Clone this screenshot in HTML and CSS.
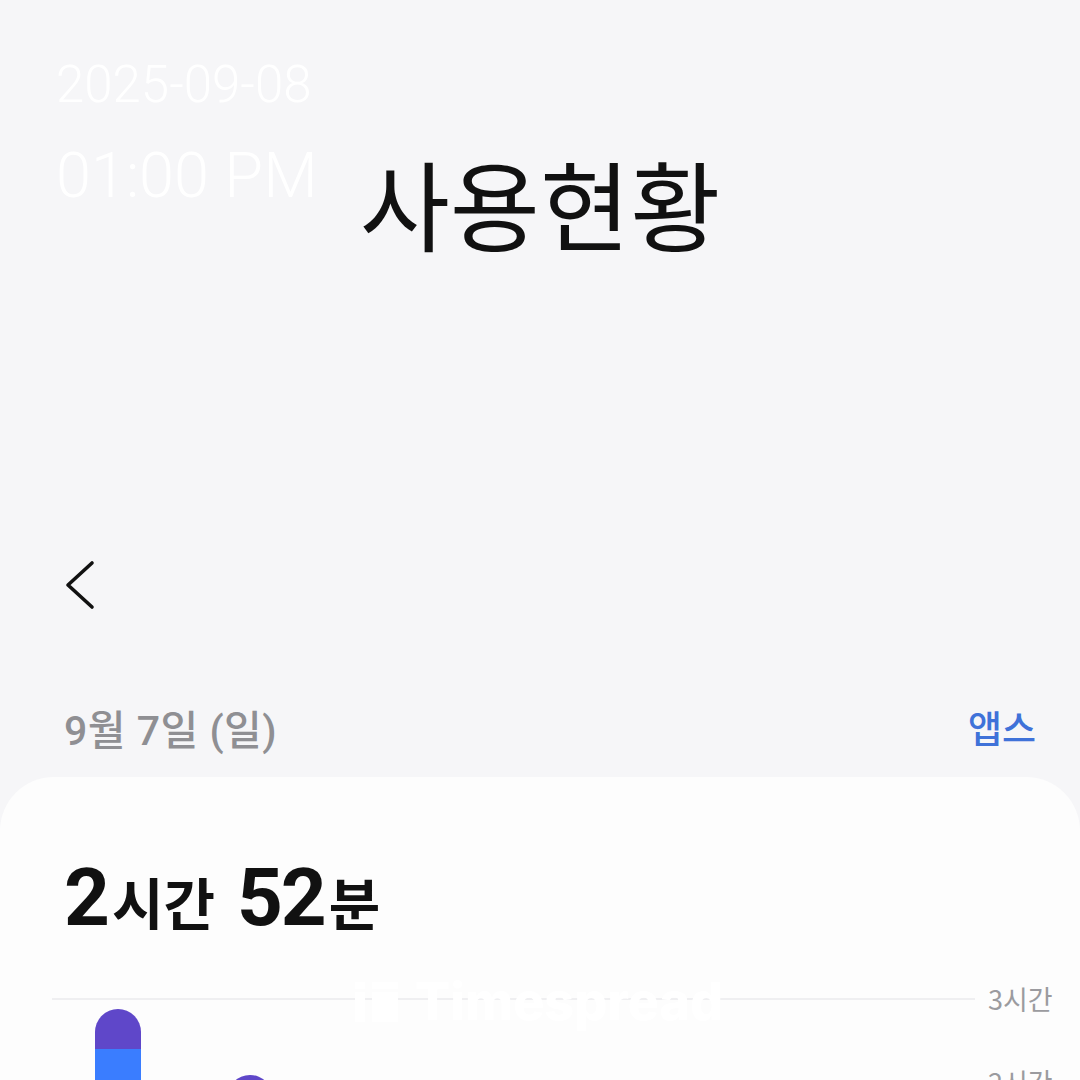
FILE: index.html
```html
<!DOCTYPE html>
<html lang="ko">
<head>
    <meta charset="UTF-8">
    <meta name="viewport" content="width=device-width, initial-scale=1.0">
    <title>사용현황</title>
    <link rel="stylesheet" href="styles.css">
</head>
<body>
    <div class="stamp">
        <div class="stamp-date">2025-09-08</div>
        <div class="stamp-time">01:00 PM</div>
    </div>

    <div class="hero">
        <h1>사용현황</h1>
    </div>

    <div class="nav">
        <svg class="back" width="40" height="56" viewBox="0 0 40 56">
            <path d="M28 5 L4 27 L28 49" fill="none" stroke="#111" stroke-width="3.6" stroke-linecap="round" stroke-linejoin="round"/>
        </svg>
    </div>

    <div class="date-row">
        <span class="day">9월 7일 (일)</span>
        <span class="apps">앱스</span>
    </div>

    <div class="card">
        <div class="total"><span class="num">2</span><span class="unit">시간</span><span class="num gap">52</span><span class="unit">분</span></div>

        <div class="chart">
            <div class="grid-lines">
                <div class="grid-row"><div class="line"></div><span class="label">3시간</span></div>
                <div class="grid-row"><div class="line"></div><span class="label">2시간</span></div>
                <div class="grid-row"><div class="line"></div><span class="label">1시간</span></div>
                <div class="grid-row"><div class="line"></div><span class="label">0</span></div>
            </div>
            <div class="bars">
                <div class="bar" style="height: 238px"><div class="seg-a" style="height: 40px"></div><div class="seg-b"></div></div>
                <div class="bar" style="height: 172px"><div class="seg-a" style="height: 36px"></div><div class="seg-b"></div></div>
                <div class="bar" style="height: 110px"><div class="seg-a" style="height: 30px"></div><div class="seg-b"></div></div>
                <div class="bar" style="height: 140px"><div class="seg-a" style="height: 34px"></div><div class="seg-b"></div></div>
                <div class="bar" style="height: 80px"><div class="seg-a" style="height: 24px"></div><div class="seg-b"></div></div>
                <div class="bar" style="height: 120px"><div class="seg-a" style="height: 30px"></div><div class="seg-b"></div></div>
                <div class="bar" style="height: 60px"><div class="seg-a" style="height: 20px"></div><div class="seg-b"></div></div>
            </div>
        </div>
    </div>

    <div class="watermark">
        <svg width="44" height="40" viewBox="0 0 44 40">
            <rect x="0" y="0" width="10" height="7" fill="#fff"/>
            <rect x="0" y="10" width="10" height="30" fill="#fff"/>
            <rect x="17" y="0" width="26" height="7" fill="#fff"/>
            <rect x="17" y="10" width="26" height="30" fill="#fff"/>
        </svg>
        <span>Timespread</span>
    </div>
</body>
</html>
```

FILE: styles.css
```css
body {
    margin: 0;
    background-color: #f6f6f8;
    font-family: Roboto, "Noto Sans CJK KR", sans-serif;
    color: #111;
    overflow: hidden;
}
.stamp {
    position: absolute;
    top: 59px;
    left: 56px;
    color: #fff;
    font-family: Roboto, sans-serif;
    font-weight: 300;
    line-height: 1;
}
.stamp-date {
    font-size: 51px;
}
.stamp-time {
    margin-top: 34px;
    font-size: 63px;
}
.hero {
    height: 546px;
    box-sizing: border-box;
    padding-top: 147px;
    text-align: center;
}
h1 {
    margin: 0;
    font-family: "Noto Sans CJK KR", sans-serif;
    font-size: 98px;
    font-weight: 400;
    line-height: 108px;
}
.nav {
    height: 80px;
    display: flex;
    align-items: center;
    padding-left: 64px;
}
.date-row {
    margin-top: 76px;
    height: 50px;
    display: flex;
    align-items: center;
    justify-content: space-between;
    padding: 0 44px 0 64px;
    font-size: 37px;
    font-weight: 500;
}
.day {
    color: #8f8f93;
    font-size: 41px;
    letter-spacing: 0.5px;
}
.apps {
    color: #3f72d9;
}
.card {
    margin-top: 25px;
    min-height: 500px;
    background-color: #fdfdfd;
    border-radius: 54px 54px 0 0;
    padding: 73px 27px 0 52px;
}
.total {
    padding-left: 12px;
    line-height: 96px;
    font-weight: 700;
}
.total .num {
    font-size: 80px;
    letter-spacing: -2px;
}
.total .gap {
    margin-left: 22px;
}
.total .unit {
    margin-left: 4px;
    font-family: "Noto Sans CJK KR", sans-serif;
    font-size: 56px;
}
.chart {
    display: grid;
    margin-top: -11px;
}
.grid-lines,
.bars {
    grid-area: 1 / 1;
}
.grid-row {
    height: 83px;
    display: flex;
    align-items: center;
}
.line {
    flex: 1;
    height: 2px;
    background-color: #efeff1;
}
.label {
    width: 65px;
    margin-left: 13px;
    font-family: "Noto Sans CJK KR", sans-serif;
    font-size: 27px;
    color: #9b9b9f;
}
.bars {
    margin: 41px 78px 0 0;
    height: 249px;
    display: grid;
    grid-template-columns: repeat(7, 1fr);
    align-items: end;
    justify-items: center;
}
.bar {
    width: 46px;
    border-radius: 23px 23px 0 0;
    overflow: hidden;
    display: flex;
    flex-direction: column;
}
.seg-a {
    background-color: #5f47c9;
}
.seg-b {
    flex: 1;
    background-color: #3a7dff;
}
.watermark {
    position: absolute;
    top: 982px;
    left: 355px;
    display: flex;
    align-items: center;
    gap: 16px;
    color: #fff;
    font-family: Inter, sans-serif;
    font-size: 52px;
    font-weight: 800;
    line-height: 40px;
}
```
